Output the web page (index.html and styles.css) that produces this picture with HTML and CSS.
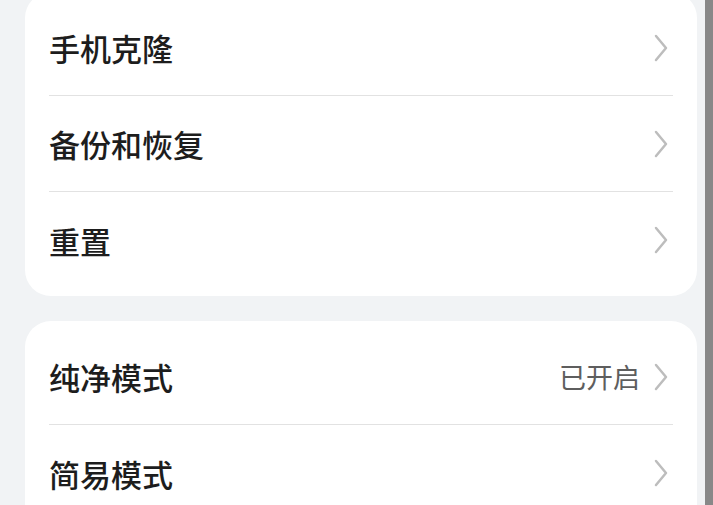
FILE: index.html
```html
<!DOCTYPE html>
<html lang="zh-CN">
<head>
  <meta charset="UTF-8" />
  <meta name="viewport" content="width=device-width, initial-scale=1.0" />
  <title>系统和更新</title>
  <link rel="stylesheet" href="styles.css">
</head>
<body>
  <div class="page">
    <div class="card card-first">
      <div class="row">
        <span class="label">手机克隆</span>
        <span class="chevron"><svg viewBox="0 0 14 28" width="14" height="28"><path d="M2 2 L12 14 L2 26" /></svg></span>
      </div>
      <div class="row">
        <span class="label">备份和恢复</span>
        <span class="chevron"><svg viewBox="0 0 14 28" width="14" height="28"><path d="M2 2 L12 14 L2 26" /></svg></span>
      </div>
      <div class="row">
        <span class="label">重置</span>
        <span class="chevron"><svg viewBox="0 0 14 28" width="14" height="28"><path d="M2 2 L12 14 L2 26" /></svg></span>
      </div>
    </div>

    <div class="card">
      <div class="row">
        <span class="label">纯净模式</span>
        <span class="value">已开启</span>
        <span class="chevron"><svg viewBox="0 0 14 28" width="14" height="28"><path d="M2 2 L12 14 L2 26" /></svg></span>
      </div>
      <div class="row">
        <span class="label">简易模式</span>
        <span class="chevron"><svg viewBox="0 0 14 28" width="14" height="28"><path d="M2 2 L12 14 L2 26" /></svg></span>
      </div>
    </div>
  </div>
</body>
</html>
```

FILE: styles.css
```css
* {
  box-sizing: border-box;
}
html, body {
  margin: 0;
  height: 100%;
  overflow: hidden;
}
body {
  font-family: "Noto Sans CJK SC", "Noto Sans", sans-serif;
  background-color: #f1f3f5;
  color: #1d1d1d;
}
.page {
  width: 713px;
  height: 100%;
  padding: 0 8px 0 25px;
  border-right: 8px solid #888888;
  display: flex;
  flex-direction: column;
  gap: 25px;
}
.card {
  background: #ffffff;
  border-radius: 26px;
  padding: 8px 24px;
}
.card-first {
  margin-top: -8px;
}
.row {
  height: 96px;
  display: flex;
  align-items: center;
  border-bottom: 1px solid #e2e2e2;
}
.row:last-child {
  border-bottom: none;
}
.label {
  flex: 1;
  font-size: 31px;
  font-weight: 500;
  line-height: 1;
}
.value {
  font-size: 27px;
  color: #5e5e5e;
  margin-right: 14px;
}
.chevron {
  display: flex;
  margin-right: 5px;
}
.chevron path {
  fill: none;
  stroke: #bdbdbd;
  stroke-width: 2.5;
  stroke-linecap: round;
  stroke-linejoin: round;
}
```
